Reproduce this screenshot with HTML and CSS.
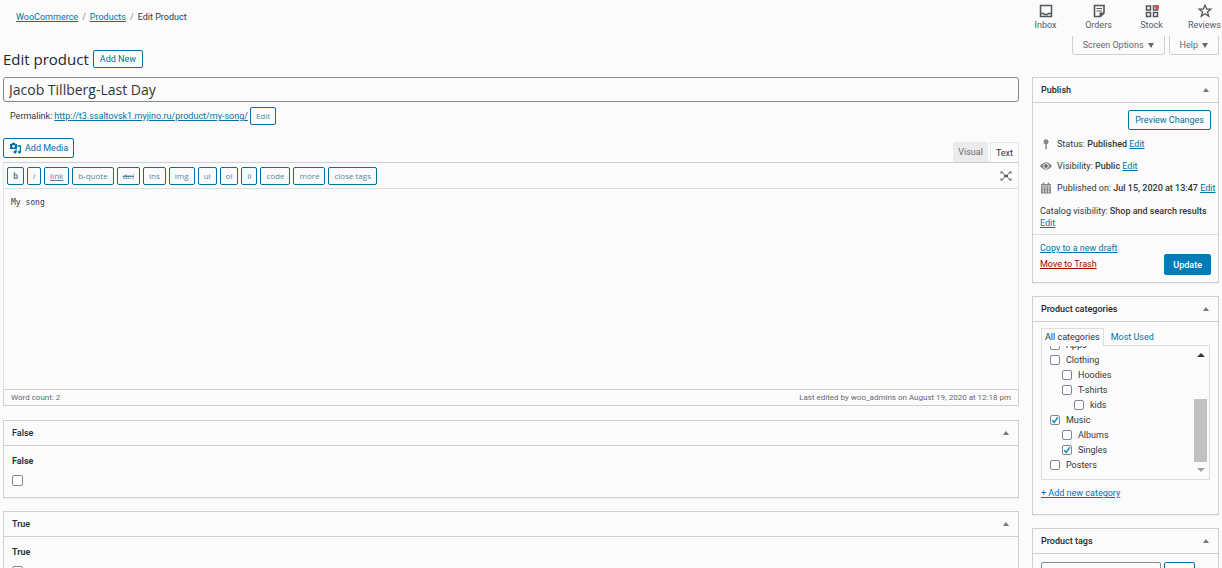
FILE: index.html
```html
<!DOCTYPE html>
<html lang="en">
    <head>
        <meta charset="UTF-8">
        <meta name="viewport" content="width=device-width, initial-scale=1.0">
        <link rel="stylesheet" href="styles.css">
        <title>Edit product</title>
    </head>
    <body>
        <!--======================= header =======================-->
        <header class="topbar">
            <nav class="breadcrumb">
                <a href="#">WooCommerce</a><span class="sep">/</span><a href="#">Products</a><span class="sep">/</span><span>Edit Product</span>
            </nav>
            <nav class="activity">
                <button type="button">
                    <svg width="16" height="16" viewBox="0 0 16 16"><path d="M2.5 2.5h11v11h-11zM2.5 10.5h3l1 1h3l1-1h3" fill="none" stroke="#50575e" stroke-width="1.5"/></svg>
                    Inbox
                </button>
                <button type="button">
                    <svg width="16" height="16" viewBox="0 0 16 16"><path d="M3.5 2.5h9.500v7.500l-3.500 3.500h-6z" fill="none" stroke="#50575e" stroke-width="1.600"/><path d="M5.500 5.500h5.500M5.500 8h5.500" stroke="#50575e" stroke-width="1.200"/><path d="M8.500 9.500h4.500l-4.500 4.500z" fill="#50575e"/></svg>
                    Orders
                </button>
                <button type="button">
                    <svg width="16" height="16" viewBox="0 0 16 16"><path d="M2.500 3h4v4h-4zM2.500 9.500h4v4h-4zM9.500 9.500h4v4h-4zM9.500 3h4v4h-4z" fill="none" stroke="#50575e" stroke-width="1.500"/><circle cx="13" cy="4" r="2.200" fill="#d94f4f"/></svg>
                    Stock
                </button>
                <button type="button">
                    <svg width="16" height="16" viewBox="0 0 16 16"><path d="M8 2.200l1.700 4h4.100l-3.300 2.700 1.200 4.300L8 10.800l-3.700 2.400 1.200-4.300-3.300-2.700h4.100z" fill="none" stroke="#50575e" stroke-width="1.300"/></svg>
                    Reviews
                </button>
            </nav>
        </header>

        <div class="heading">
            <div class="heading-title">
                <h1>Edit product</h1>
                <a class="btn" href="#">Add New</a>
            </div>
            <div class="screen-meta">
                <button type="button">Screen Options <span class="caret"></span></button>
                <button type="button">Help <span class="caret"></span></button>
            </div>
        </div>

        <form class="columns">
            <!--======================= main column =======================-->
            <main>
                <input class="title" type="text" aria-label="Product name" value="Jacob Tillberg-Last Day">
                <div class="permalink">
                    <span>Permalink:</span>
                    <a href="#">http://t3.ssaltovsk1.myjino.ru/product/my-song/</a>
                    <button type="button" class="btn btn-small">Edit</button>
                </div>

                <div class="editor-tools">
                    <button type="button" class="btn add-media">
                        <svg width="12" height="12" viewBox="0 0 12 12"><path d="M1 2h1.500l.8-1.200h2.400L6.500 2H8v5H1z" fill="#0071a1"/><circle cx="4.500" cy="4.300" r="1.400" fill="#fbfbfb"/><path d="M8.500 4h3v5.700" fill="none" stroke="#0071a1" stroke-width="1.300"/><path d="M7 7.500v2.500" stroke="#0071a1" stroke-width="1.200"/><circle cx="6" cy="10" r="1.500" fill="#0071a1"/><circle cx="10.500" cy="10" r="1.500" fill="#0071a1"/></svg>
                        Add Media
                    </button>
                    <div class="editor-tabs">
                        <button type="button">Visual</button>
                        <button type="button" class="active">Text</button>
                    </div>
                </div>

                <div class="editor">
                    <div class="quicktags">
                        <button type="button" class="btn btn-small"><b>b</b></button>
                        <button type="button" class="btn btn-small"><i>i</i></button>
                        <button type="button" class="btn btn-small"><u>link</u></button>
                        <button type="button" class="btn btn-small">b-quote</button>
                        <button type="button" class="btn btn-small"><s>del</s></button>
                        <button type="button" class="btn btn-small">ins</button>
                        <button type="button" class="btn btn-small">img</button>
                        <button type="button" class="btn btn-small">ul</button>
                        <button type="button" class="btn btn-small">ol</button>
                        <button type="button" class="btn btn-small">li</button>
                        <button type="button" class="btn btn-small">code</button>
                        <button type="button" class="btn btn-small">more</button>
                        <button type="button" class="btn btn-small">close tags</button>
                        <button type="button" class="fullscreen" aria-label="Distraction-free writing mode">
                            <svg width="12" height="12" viewBox="0 0 12 12"><path d="M2 2.500l2.500 2M10 2.500l-2.500 2M2 9.500l2.500-2M10 9.500l-2.500-2" stroke="#50575e" stroke-width="1"/><path d="M.5 1.500h2.500l-2.500 2.500zM11.500 1.500h-2.500l2.500 2.500zM.5 10.500h2.500l-2.500-2.500zM11.500 10.500h-2.500l2.500-2.500z" fill="#50575e"/><path d="M4 4.800h4v2.400H4z" fill="#50575e"/></svg>
                        </button>
                    </div>
                    <textarea aria-label="Product description">My song</textarea>
                </div>
                <div class="editor-status">
                    <span>Word count: 2</span>
                    <span>Last edited by woo_admins on August 19, 2020 at 12:18 pm</span>
                </div>

                <section class="box">
                    <div class="box-head"><h2>False</h2><button type="button" class="toggle" aria-label="Toggle panel"></button></div>
                    <div class="field">
                        <label for="field-false">False</label>
                        <input type="checkbox" id="field-false">
                    </div>
                </section>

                <section class="box">
                    <div class="box-head"><h2>True</h2><button type="button" class="toggle" aria-label="Toggle panel"></button></div>
                    <div class="field">
                        <label for="field-true">True</label>
                        <input type="checkbox" id="field-true">
                    </div>
                </section>
            </main>

            <!--======================= sidebar =======================-->
            <aside>
                <section class="box">
                    <div class="box-head"><h2>Publish</h2><button type="button" class="toggle" aria-label="Toggle panel"></button></div>
                    <div class="preview"><button type="button" class="btn">Preview Changes</button></div>
                    <ul class="publish-info">
                        <li>
                            <svg width="12" height="12" viewBox="0 0 12 12"><circle cx="6" cy="3.800" r="2.500" fill="#82878c"/><path d="M6 5v6.500" stroke="#82878c" stroke-width="1.400"/></svg>
                            <span>Status: <b>Published</b> <a href="#">Edit</a></span>
                        </li>
                        <li>
                            <svg width="12" height="12" viewBox="0 0 12 12"><path d="M0 6q6-7.500 12 0-6 7.500-12 0z" fill="#82878c"/><circle cx="6" cy="6" r="2.700" fill="#fbfbfb"/><circle cx="6" cy="6" r="1.900" fill="#6c7177"/></svg>
                            <span>Visibility: <b>Public</b> <a href="#">Edit</a></span>
                        </li>
                        <li>
                            <svg width="12" height="12" viewBox="0 0 12 12"><path d="M1 2h10v9.500H1z" fill="#82878c"/><path d="M3.500.5v2M8.500.5v2" stroke="#82878c" stroke-width="1.500"/><path d="M1 4h10" stroke="#fbfbfb" stroke-width=".8"/><path d="M3.200 5.200v5.300M6 5.200v5.300M8.800 5.200v5.300" stroke="#fbfbfb" stroke-width="1" stroke-dasharray="2.300 .7"/></svg>
                            <span>Published on: <b>Jul 15, 2020 at 13:47</b> <a href="#">Edit</a></span>
                        </li>
                    </ul>
                    <p class="catalog">Catalog visibility: <b>Shop and search results</b> <a href="#">Edit</a></p>
                    <div class="publish-actions">
                        <div class="links">
                            <a href="#">Copy to a new draft</a>
                            <a href="#" class="trash">Move to Trash</a>
                        </div>
                        <button type="submit" class="btn btn-primary">Update</button>
                    </div>
                </section>

                <section class="box">
                    <div class="box-head"><h2>Product categories</h2><button type="button" class="toggle" aria-label="Toggle panel"></button></div>
                    <div class="categories">
                        <div class="category-tabs">
                            <a href="#" class="active">All categories</a>
                            <a href="#">Most Used</a>
                        </div>
                        <div class="category-panel">
                            <div class="category-list">
                                <label><input type="checkbox">Apps</label>
                                <label><input type="checkbox">Clothing</label>
                                <label class="level-1"><input type="checkbox">Hoodies</label>
                                <label class="level-1"><input type="checkbox">T-shirts</label>
                                <label class="level-2"><input type="checkbox">kids</label>
                                <label><input type="checkbox" checked>Music</label>
                                <label class="level-1"><input type="checkbox">Albums</label>
                                <label class="level-1"><input type="checkbox" checked>Singles</label>
                                <label><input type="checkbox">Posters</label>
                            </div>
                            <div class="scrollbar">
                                <span class="scroll-up"></span>
                                <span class="scroll-thumb"></span>
                                <span class="scroll-down"></span>
                            </div>
                        </div>
                        <a class="add-category" href="#">+ Add new category</a>
                    </div>
                </section>

                <section class="box">
                    <div class="box-head"><h2>Product tags</h2><button type="button" class="toggle" aria-label="Toggle panel"></button></div>
                    <div class="tags">
                        <input type="text" aria-label="Add new tag">
                        <button type="button" class="btn" aria-label="Add"></button>
                    </div>
                </section>
            </aside>
        </form>
    </body>
</html>
```
FILE: styles.css
```css
*{
    box-sizing: border-box;
}

body{
    margin: 0;
    height: 100vh;
    overflow: hidden;
    font-family: Roboto, "Open Sans", sans-serif;
    font-size: 9px;
    line-height: 12px;
    background-color: #fbfbfb;
    color: #32373c;
}

h1, h2, p, ul{
    margin: 0;
    padding: 0;
    font-weight: 400;
}

b{
    font-weight: 500;
}

a{
    color: #0073aa;
}

button, input, textarea{
    font-family: inherit;
    font-size: inherit;
    line-height: inherit;
    color: inherit;
    margin: 0;
}

button{
    padding: 0;
    border: none;
    background: none;
    white-space: nowrap;
}

svg{
    display: block;
    flex: none;
}

/*************************************************************************************************/

/* buttons */
.btn{
    display: inline-flex;
    align-items: center;
    justify-content: center;
    height: 20px;
    padding: 0 6px;
    border: 1px solid #0071a1;
    border-radius: 2px;
    background-color: #fbfbfb;
    color: #0071a1;
    text-decoration: none;
}

.btn-small{
    height: 18px;
    padding: 0 5px;
    font-family: "Open Sans", sans-serif;
    font-size: 8px;
    color: #4f87a3;
}

.btn-small b{
    font-weight: 700;
}

.btn-primary{
    height: 21px;
    padding: 0 8px;
    border-color: #007cba;
    background-color: #007cba;
    color: #fff;
    font-weight: 500;
}

/*************************************************************************************************/

/* checkboxes */
input[type="checkbox"]{
    appearance: none;
    flex: none;
    width: 10px;
    height: 10px;
    border: 1px solid #7e8993;
    border-radius: 2px;
    background-color: #fff;
}

input[type="checkbox"]:checked{
    background: #fff url("data:image/svg+xml,%3Csvg xmlns='http://www.w3.org/2000/svg' viewBox='0 0 10 10'%3E%3Cpath d='M1.500 5l2.500 3 4.500-6.500' fill='none' stroke='%231e8cbe' stroke-width='1.900'/%3E%3C/svg%3E") center / 100% no-repeat;
}

/*************************************************************************************************/

/* header */
.topbar{
    display: flex;
    justify-content: space-between;
    height: 36px;
    padding-left: 16px;
}

.breadcrumb{
    padding-top: 11px;
}

.breadcrumb .sep{
    margin: 0 4px;
    color: #82878c;
}

.activity{
    display: grid;
    grid-template-columns: repeat(4, 53px);
    align-items: start;
    margin-right: -9px;
    padding-top: 3px;
}

.activity button{
    display: flex;
    flex-direction: column;
    align-items: center;
    color: #555d66;
}

.heading{
    display: flex;
    justify-content: space-between;
    align-items: flex-start;
    height: 41px;
    padding: 0 3px;
}

.heading-title{
    display: flex;
    align-items: center;
    gap: 4px;
    padding-top: 14px;
}

.heading-title .btn{
    height: 18px;
}

h1{
    font-family: "Open Sans", sans-serif;
    font-size: 15px;
    line-height: 18px;
    color: #23282d;
}

.screen-meta{
    display: flex;
    gap: 4px;
}

.screen-meta button{
    display: flex;
    align-items: center;
    gap: 4px;
    height: 19px;
    padding: 0 10px;
    border: 1px solid #ccd0d4;
    border-top: none;
    border-radius: 0 0 3px 3px;
    color: #646970;
}

.caret{
    border: 3px solid transparent;
    border-top: 5px solid #646970;
    border-bottom: none;
}

/*************************************************************************************************/

/* two columns */
.columns{
    display: grid;
    grid-template-columns: minmax(0, 1fr) 187px;
    align-items: start;
    gap: 13px;
    padding: 0 3px;
}

.title{
    display: block;
    width: 100%;
    height: 25px;
    padding: 0 5px;
    border: 1px solid #7e8993;
    border-radius: 3px;
    background-color: #fbfbfb;
    font-family: "Open Sans", sans-serif;
    font-size: 14px;
}

.permalink{
    display: flex;
    align-items: center;
    gap: 2px;
    padding: 5px 7px 0;
}

.editor-tools{
    display: flex;
    justify-content: space-between;
    align-items: flex-end;
    margin-top: 13px;
}

.add-media{
    gap: 4px;
    margin-bottom: 4px;
    padding: 0 5px;
}

.editor-tabs{
    display: flex;
    gap: 2px;
}

.editor-tabs button{
    height: 20px;
    padding: 0 5px;
    background-color: #ebebeb;
    color: #646970;
}

.editor-tabs .active{
    border: 1px solid #e5e5e5;
    border-bottom: none;
    background-color: #fbfbfb;
    color: #32373c;
}

.editor{
    border: 1px solid #e5e5e5;
    border-top-color: #ccd0d4;
    border-bottom: none;
}

.quicktags{
    display: flex;
    align-items: center;
    gap: 3px;
    height: 26px;
    padding: 0 6px 0 3px;
    border-bottom: 1px solid #dddddd;
}

.fullscreen{
    margin-left: auto;
}

textarea{
    display: block;
    width: 100%;
    height: 200px;
    padding: 8px 7px;
    border: none;
    background-color: #fbfbfb;
    font-family: "DejaVu Sans Mono", monospace;
    font-size: 8px;
    resize: none;
}

.editor-status{
    display: flex;
    justify-content: space-between;
    align-items: center;
    height: 17px;
    padding: 0 7px;
    border: 1px solid #ccd0d4;
    font-size: 8px;
    color: #646970;
}

/*************************************************************************************************/

/* panels */
.box{
    border: 1px solid #ccd0d4;
    box-shadow: 0 1px 1px rgba(0, 0, 0, 0.04);
}

.box + .box{
    margin-top: 13px;
}

.editor-status + .box{
    margin-top: 14px;
}

.box-head{
    display: flex;
    justify-content: space-between;
    align-items: center;
    height: 25px;
    padding: 0 9px 0 8px;
    border-bottom: 1px solid #ccd0d4;
}

.box-head h2{
    font-size: 9px;
    font-weight: 500;
    color: #23282d;
}

.toggle{
    border: 3px solid transparent;
    border-top: none;
    border-bottom: 4px solid #72777c;
}

.field{
    display: flex;
    flex-direction: column;
    align-items: flex-start;
    gap: 8px;
    padding: 9px 8px 11px;
}

.field label{
    font-weight: 700;
}

.field input[type="checkbox"]{
    width: 11px;
    height: 11px;
}

/*************************************************************************************************/

/* publish */
.preview{
    display: flex;
    justify-content: flex-end;
    padding: 7px 7px 3px;
}

.publish-info{
    list-style: none;
    padding: 0 7px;
}

.publish-info li{
    display: flex;
    align-items: center;
    gap: 5px;
    height: 22px;
    white-space: nowrap;
}

.catalog{
    padding: 6px 7px 5px;
}

.publish-actions{
    display: flex;
    justify-content: space-between;
    align-items: flex-end;
    padding: 7px;
    border-top: 1px solid #dddddd;
}

.links{
    display: flex;
    flex-direction: column;
    gap: 4px;
    padding-bottom: 5px;
}

.trash{
    color: #a00;
}

/*************************************************************************************************/

/* categories */
.categories{
    padding: 6px 8px 15px;
}

.category-tabs{
    display: flex;
    height: 17px;
}

.category-tabs a{
    padding: 2px 3px;
    border: 1px solid transparent;
    text-decoration: none;
}

.category-tabs .active{
    /* covers the panel's top border */
    margin-bottom: -1px;
    border-color: #dddddd;
    border-bottom: none;
    background-color: #fbfbfb;
    color: #32373c;
}

.category-tabs .active + a{
    margin-left: 3px;
}

.category-panel{
    display: flex;
    justify-content: space-between;
    height: 135px;
    padding-right: 2px;
    border: 1px solid #dddddd;
}

.category-list{
    display: flex;
    flex-direction: column;
    justify-content: flex-end;
    padding: 0 8px 7px;
    overflow: hidden;
}

.category-list label{
    display: flex;
    flex: none;
    align-items: center;
    gap: 6px;
    height: 15px;
}

.category-list .level-1{
    padding-left: 12px;
}

.category-list .level-2{
    padding-left: 24px;
}

.scrollbar{
    display: flex;
    flex-direction: column;
    align-items: center;
    width: 13px;
    padding: 7px 0;
}

.scroll-up{
    margin-bottom: auto;
    border: 4px solid transparent;
    border-top: none;
    border-bottom-color: #32373c;
}

.scroll-thumb{
    width: 13px;
    height: 63px;
    margin-bottom: 6px;
    background-color: #c1c1c1;
}

.scroll-down{
    border: 4px solid transparent;
    border-bottom: none;
    border-top-color: #a3a3a3;
}

.add-category{
    display: inline-block;
    margin-top: 7px;
}

/*************************************************************************************************/

/* tags */
.tags{
    display: flex;
    gap: 3px;
    padding: 8px;
}

.tags input{
    width: 120px;
    height: 20px;
    border: 1px solid #7e8993;
    border-radius: 2px;
    background-color: #fbfbfb;
}

.tags .btn{
    width: 31px;
}
```
